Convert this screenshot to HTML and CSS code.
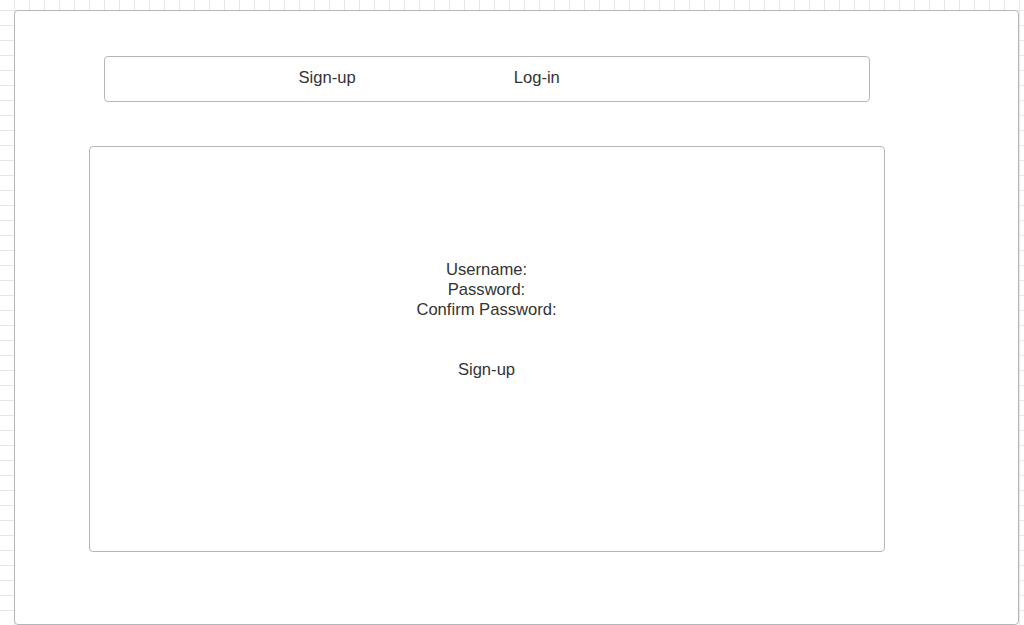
FILE: index.html
```html
<!DOCTYPE html>
<html>
<head>
<meta charset="utf-8">
<link rel="stylesheet" href="styles.css">
</head>
<body>
<div class="frame">
  <nav class="tabs">
    <span class="tab">Sign-up</span>
    <span class="tab">Log-in</span>
  </nav>
  <section class="panel">
    <div class="fields">
      <div>Username:</div>
      <div>Password:</div>
      <div>Confirm Password:</div>
    </div>
    <div class="submit">Sign-up</div>
  </section>
</div>
</body>
</html>
```
FILE: styles.css
```css
html, body {
  margin: 0;
  padding: 0;
  height: 625px;
  overflow: hidden;
}
body {
  background-color: #ffffff;
  background-image:
    linear-gradient(to right, #e6e6e6 1px, transparent 1px),
    linear-gradient(to bottom, #e6e6e6 1px, transparent 1px);
  background-size: 15px 15px;
  background-position: 14px 10px;
  font-family: "Liberation Sans", Arial, sans-serif;
  font-size: 16.6px;
  color: #333333;
  padding-top: 10px;
  padding-left: 14px;
  box-sizing: border-box;
}
.frame {
  box-sizing: border-box;
  width: 1005px;
  height: 615px;
  background: #ffffff;
  border: 1.5px solid #b3b7bb;
  border-radius: 4px;
  padding-top: 44.5px;
  padding-left: 73.5px;
}
.tabs {
  box-sizing: border-box;
  margin-left: 15px;
  width: 766px;
  height: 46px;
  border: 1.5px solid #b3b7bb;
  border-radius: 4px;
  display: flex;
  align-items: center;
  padding-left: 194px;
  gap: 158px;
  line-height: 20px;
  padding-bottom: 2px;
}
.panel {
  box-sizing: border-box;
  margin-top: 44px;
  width: 796px;
  height: 406px;
  border: 1.5px solid #b3b7bb;
  border-radius: 4px;
  display: flex;
  flex-direction: column;
  align-items: center;
  padding-top: 113px;
  line-height: 20px;
}
.fields {
  display: flex;
  flex-direction: column;
  align-items: center;
}
.submit {
  margin-top: 40px;
}
```
